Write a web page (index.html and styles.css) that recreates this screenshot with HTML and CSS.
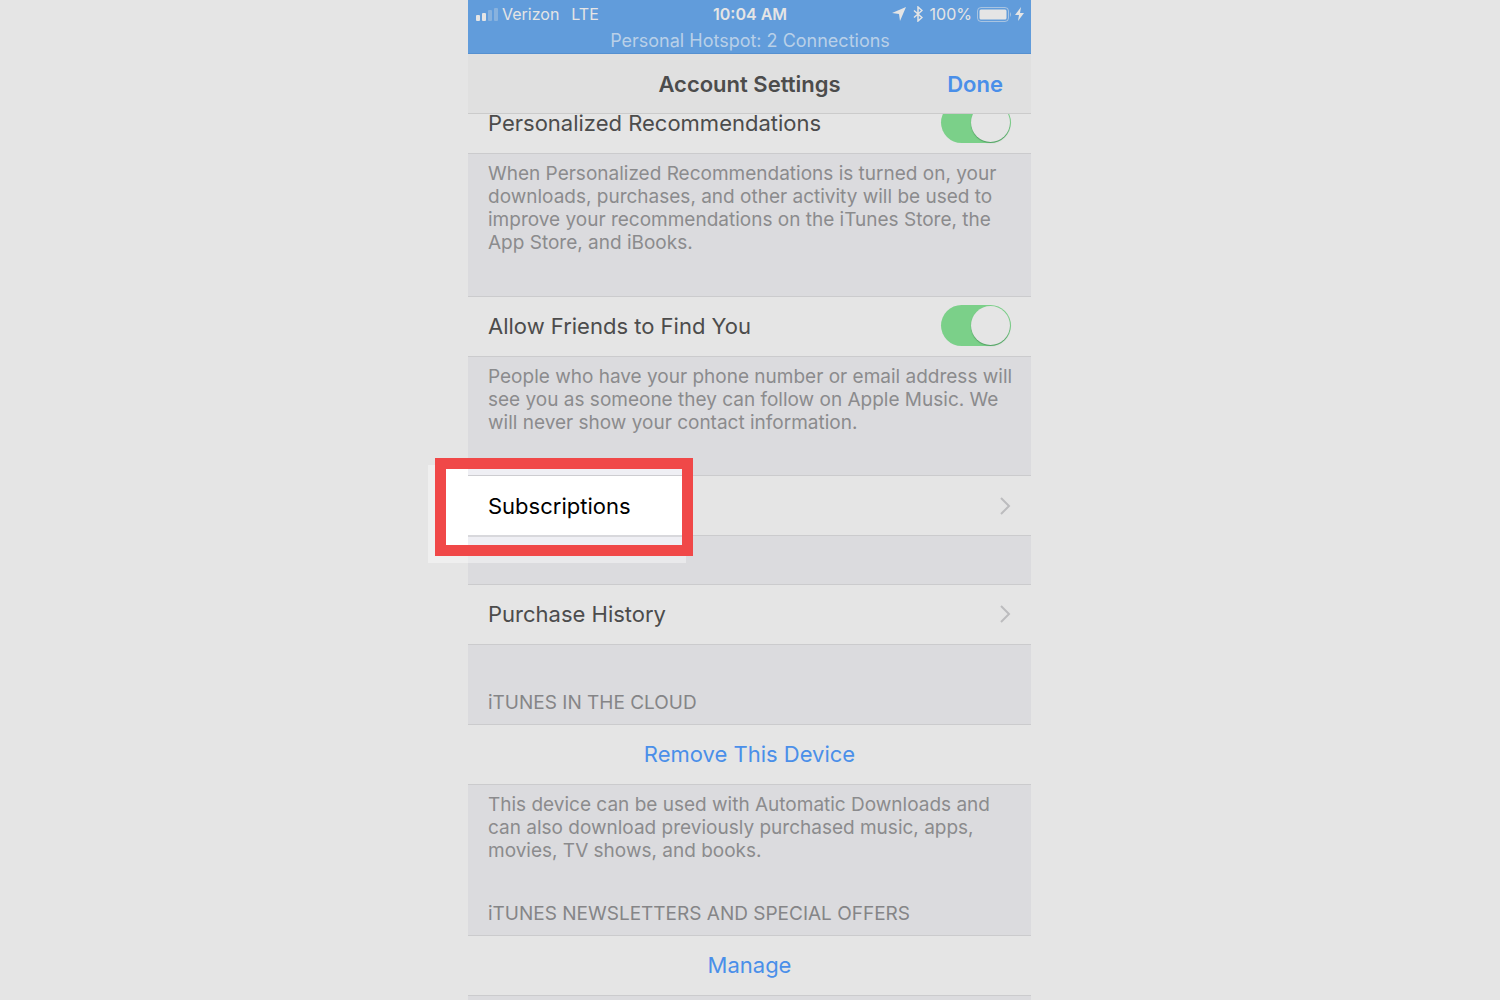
FILE: index.html
```html
<!DOCTYPE html>
<html lang="en">
<head>
<meta charset="utf-8">
<meta name="viewport" content="width=device-width, initial-scale=1">
<title>Account Settings</title>
<link rel="stylesheet" href="styles.css">
</head>
<body>
<div class="phone">
  <header class="status">
    <div class="status-row">
      <div class="status-left">
        <svg class="signal" width="22" height="14" viewBox="0 0 22 14" aria-hidden="true">
          <rect x="0" y="8" width="4" height="6" rx="1"/>
          <rect x="6" y="6" width="4" height="8" rx="1"/>
          <rect x="12" y="3" width="4" height="11" rx="1" opacity=".3"/>
          <rect x="18" y="1" width="4" height="13" rx="1" opacity=".3"/>
        </svg>
        <span>Verizon</span>
        <span class="network">LTE</span>
      </div>
      <time class="clock">10:04 AM</time>
      <div class="status-right">
        <svg width="14" height="14" viewBox="0 0 14 14" aria-hidden="true"><path d="M14 0 8 14 7 7 0 6Z"/></svg>
        <svg class="bluetooth" width="10" height="16" viewBox="0 0 10 16" aria-hidden="true"><path d="M1 4.5 9 11.5 5 15V1L9 4.5 1 11.5"/></svg>
        <span>100%</span>
        <span class="power">
          <svg width="36" height="15" viewBox="0 0 36 15" aria-hidden="true">
            <rect x=".5" y=".5" width="31" height="14" rx="3.5" fill="none" stroke="#e5e5e5" opacity=".55"/>
            <rect x="2.500" y="2.500" width="27" height="10" rx="1.500"/>
            <path d="M33 5q2 2.500 0 5z" opacity=".55"/>
          </svg>
          <svg width="9" height="14" viewBox="0 0 9 14" aria-hidden="true"><path d="M6 0 0 8h4L3 14 9 6H5Z"/></svg>
        </span>
      </div>
    </div>
    <p class="hotspot">Personal Hotspot: 2 Connections</p>
  </header>
  <nav class="navbar">
    <h1>Account Settings</h1>
    <button type="button" class="done">Done</button>
  </nav>
  <main class="settings">
    <div class="row scrolled">
      <label for="recommendations">Personalized Recommendations</label>
      <input class="switch" type="checkbox" id="recommendations" checked>
    </div>
    <p class="note">When Personalized Recommendations is turned on, your<br>downloads, purchases, and other activity will be used to<br>improve your recommendations on the iTunes Store, the<br>App Store, and iBooks.</p>
    <div class="row">
      <label for="friends">Allow Friends to Find You</label>
      <input class="switch" type="checkbox" id="friends" checked>
    </div>
    <p class="note note-short">People who have your phone number or email address will<br>see you as someone they can follow on Apple Music. We<br>will never show your contact information.</p>
    <a class="row highlighted" href="#subscriptions">
      <span class="row-title">Subscriptions</span>
      <svg class="chevron" width="12" height="18" viewBox="0 0 12 18" aria-hidden="true"><path d="M2 1l8 8-8 8"/></svg>
    </a>
    <a class="row spaced" href="#history">
      <span class="row-title">Purchase History</span>
      <svg class="chevron" width="12" height="18" viewBox="0 0 12 18" aria-hidden="true"><path d="M2 1l8 8-8 8"/></svg>
    </a>
    <h2 class="group-title">iTUNES IN THE CLOUD</h2>
    <button type="button" class="row action">Remove This Device</button>
    <p class="note note-last">This device can be used with Automatic Downloads and<br>can also download previously purchased music, apps,<br>movies, TV shows, and books.</p>
    <h2 class="group-title">iTUNES NEWSLETTERS AND SPECIAL OFFERS</h2>
    <button type="button" class="row action">Manage</button>
  </main>
</div>
</body>
</html>
```
FILE: styles.css
```css
*, *::before { box-sizing: border-box; }

body {
  margin: 0;
  min-height: 100vh;
  display: grid;
  grid-template-columns: minmax(0, 468fr) minmax(0, 563px) minmax(0, 469fr);
  background: #e5e5e5;
  color: #4c4c4c;
  font-family: Inter, "Liberation Sans", sans-serif;
  font-size: 22px;
}

h1, h2, p { margin: 0; font-size: inherit; font-weight: 400; }

.phone {
  grid-column: 2;
  display: flex;
  flex-direction: column;
  background: #dbdbde;
}

.status {
  position: relative;
  z-index: 2;
  padding: 3px 7px 0 8px;
  border-bottom: 1px solid #5590d0;
  background: #619cdb;
  color: #e5e5e5;
  fill: #e5e5e5;
  font-size: 16px;
}

.status-row {
  display: grid;
  grid-template-columns: 1fr auto 1fr;
  align-items: center;
  height: 22px;
}

.status-left, .status-right, .power { display: flex; align-items: center; }
.status-left { gap: 4px; }
.network { margin-left: 8px; }
.status-right { justify-content: flex-end; gap: 5px; }
.power { gap: 2px; }
.clock { font-weight: 600; }
.bluetooth { margin: 0 2px; fill: none; stroke: #e5e5e5; stroke-width: 1.5; }

.hotspot {
  padding-top: 4px;
  color: #b9d0e8;
  font-size: 18px;
  line-height: 24px;
  text-align: center;
}

.navbar {
  position: relative;
  z-index: 1;
  display: grid;
  grid-template-columns: 1fr auto 1fr;
  align-items: center;
  height: 60px;
  padding: 0 28px;
  border-bottom: 1px solid #cbcbcb;
  background: #e0e0e0;
}

.navbar h1 { grid-column: 2; font-weight: 600; }

.done {
  justify-self: end;
  padding: 0;
  border: 0;
  background: none;
  color: #4a8fe9;
  font: inherit;
  font-weight: 600;
}

.settings { display: flex; flex-direction: column; }

.row {
  display: flex;
  align-items: center;
  justify-content: space-between;
  width: 100%;
  height: 61px;
  padding: 0 20px 2px;
  border: solid #cbcbcd;
  border-width: 1px 0;
  background: #e5e5e5;
  color: inherit;
  font: inherit;
  text-decoration: none;
}

.scrolled { margin-top: -21px; }
.spaced { margin: 48px 0 6px; }
.action { justify-content: center; color: #4a8fe9; }

.switch {
  appearance: none;
  display: flex;
  justify-content: flex-end;
  width: 70px;
  height: 41px;
  margin: 0;
  padding: 1px;
  border-radius: 21px;
  background: #7bd089;
}

.switch::before {
  content: "";
  width: 39px;
  height: 39px;
  border-radius: 50%;
  background: #e5e5e5;
  box-shadow: 0 1px 1px rgba(40, 110, 60, .5);
}

.chevron { fill: none; stroke: #bcbcbe; stroke-width: 2; }

.note, .group-title {
  font-size: 19px;
  line-height: 23px;
}

.note {
  padding: 8px 20px 42px;
  color: #8b8b8d;
  white-space: nowrap;
}

.note-short { padding-bottom: 41px; }
.note-last { padding-bottom: 0; }

.group-title {
  padding: 40px 20px 10px;
  color: #858587;
}

.highlighted { position: relative; padding-bottom: 0; }

.highlighted .row-title { position: relative; z-index: 1; color: #000; }

/* Callout frame laid over the start of the row */
.highlighted::before {
  content: "";
  position: absolute;
  top: -18px;
  left: -33px;
  width: 258px;
  height: 98px;
  border: 11px solid #f04848;
  background:
    linear-gradient(#efeff4 6px, #cdcdd1 6px 7px, #fff 7px 66px, #d8d8dc 66px 68px, #efeff4 68px) 22px 0 no-repeat padding-box,
    #fff;
  box-shadow: -7px 7px 0 rgba(255, 255, 255, .4);
}
```
